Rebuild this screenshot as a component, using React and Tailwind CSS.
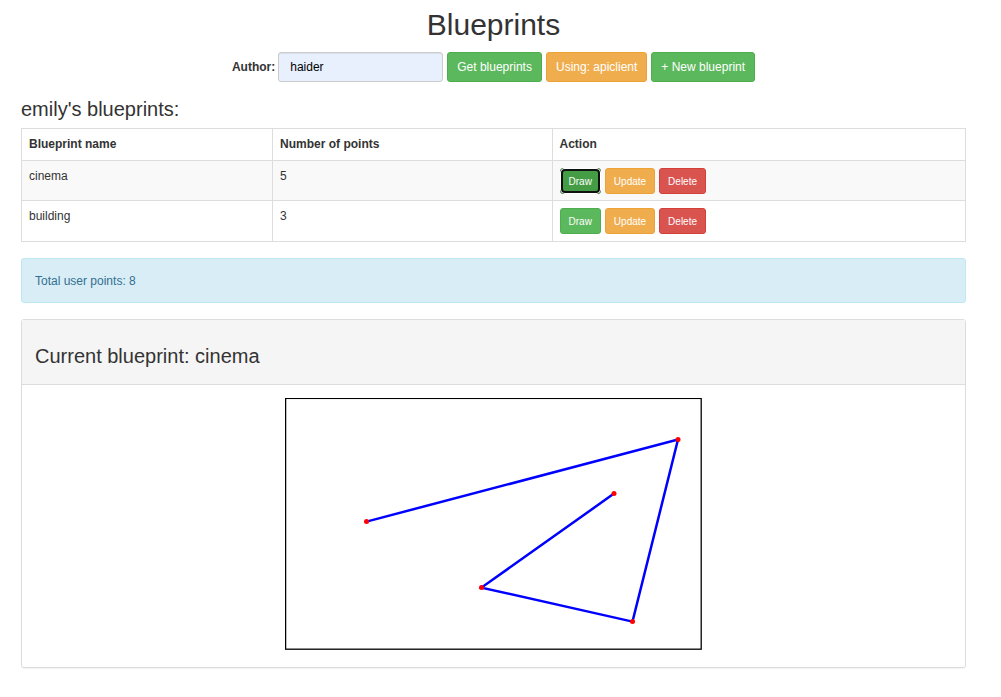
import React from 'react';

const blueprints = [
  { name: 'cinema', points: 5, focused: true },
  { name: 'building', points: 3, focused: false },
];

const vertices = [
  [81.5, 123.6],
  [393, 41.6],
  [347.5, 223.6],
  [196.5, 189.6],
  [329, 95.6],
];

const tones = {
  green: 'border-[#4cae4c] bg-[#5cb85c]',
  orange: 'border-[#eea236] bg-[#f0ad4e]',
  red: 'border-[#d43f3a] bg-[#d9534f]',
  focused:
    "relative border-[#255625] bg-[#449d44] before:absolute before:-inset-px before:rounded-[5px] before:border-2 before:border-white before:content-[''] after:absolute after:inset-0 after:rounded-[4px] after:border-2 after:border-[#101010] after:content-['']",
};

function Button({ tone, small, children }) {
  const size = small
    ? 'h-[26px] px-2 text-[10px]'
    : 'h-[30px] px-[9px] text-[12px]';
  return (
    <button type="button" className={`rounded-[3px] border text-white ${size} ${tones[tone]}`}>
      {children}
    </button>
  );
}

function BlueprintTable() {
  const cell = 'border border-[#ddd] px-[7px] pt-[7px] text-left align-top';
  return (
    <table className="w-full table-fixed border-collapse">
      <colgroup>
        <col className="w-[26.6%]" />
        <col className="w-[29.6%]" />
        <col />
      </colgroup>
      <thead>
        <tr>
          <th className={`${cell} pb-[7px]`}>Blueprint name</th>
          <th className={`${cell} pb-[7px]`}>Number of points</th>
          <th className={`${cell} pb-[7px]`}>Action</th>
        </tr>
      </thead>
      <tbody>
        {blueprints.map((bp) => (
          <tr key={bp.name} className="group odd:bg-[#f9f9f9]">
            <td className={cell}>{bp.name}</td>
            <td className={cell}>{bp.points}</td>
            <td className={`${cell} pb-[6px] group-last:pb-[7px]`}>
              <div className="flex gap-1">
                <Button small tone={bp.focused ? 'focused' : 'green'}>Draw</Button>
                <Button small tone="orange">Update</Button>
                <Button small tone="red">Delete</Button>
              </div>
            </td>
          </tr>
        ))}
      </tbody>
    </table>
  );
}

function Drawing() {
  return (
    <svg
      viewBox="0 0 417 252"
      className="mx-auto block w-full max-w-[417px]"
      role="img"
      aria-label="cinema"
    >
      <rect x="0.6" y="0.4" width="415.6" height="250.8" fill="none" stroke="#000" strokeWidth="1.3" />
      <polyline
        points={vertices.map((p) => p.join(',')).join(' ')}
        fill="none"
        stroke="#0000ff"
        strokeWidth="2.5"
      />
      {vertices.map(([x, y]) => (
        <circle key={`${x}-${y}`} cx={x} cy={y} r="2.5" fill="#ff0000" />
      ))}
    </svg>
  );
}

export default function App() {
  return (
    <main className="bg-white pt-2 pr-[35px] pb-7 pl-[21px] font-['Liberation_Sans',Arial,sans-serif] text-[12px] leading-[17px] text-[#333]">
      <h1 className="text-center text-[30px] leading-[34px]">Blueprints</h1>

      <form
        className="mt-[10px] flex flex-wrap items-center justify-center gap-1"
        onSubmit={(e) => e.preventDefault()}
      >
        <div className="flex items-center gap-[3px]">
          <label htmlFor="author" className="font-bold">Author:</label>
          <input
            id="author"
            type="text"
            defaultValue="haider"
            className="h-[30px] w-[165px] rounded-[3px] border border-[#ccc] bg-[#e8f0fe] px-[11px] text-[12px] text-black shadow-[inset_0_1px_1px_rgba(0,0,0,0.075)]"
          />
        </div>
        <Button tone="green">Get blueprints</Button>
        <Button tone="orange">Using: apiclient</Button>
        <Button tone="green">+ New blueprint</Button>
      </form>

      <h2 className="mt-[16px] mb-[8px] text-[20px] leading-[22px]">emily&#39;s blueprints:</h2>
      <BlueprintTable />

      <div className="mt-[16px] rounded-[3px] border border-[#bce8f1] bg-[#d9edf7] px-[13px] pt-[14px] pb-[12px] text-[#31708f]">
        Total user points: 8
      </div>

      <section className="mt-[16px] rounded-[3px] border border-[#ddd] shadow-[0_1px_1px_rgba(0,0,0,0.05)]">
        <div className="border-b border-[#ddd] bg-[#f5f5f5] px-[13px] pt-[25px] pb-[17px]">
          <h2 className="text-[20px] leading-[22px]">Current blueprint: cinema</h2>
        </div>
        <div className="px-[13px] pt-[13px] pb-[17px]">
          <Drawing />
        </div>
      </section>
    </main>
  );
}
